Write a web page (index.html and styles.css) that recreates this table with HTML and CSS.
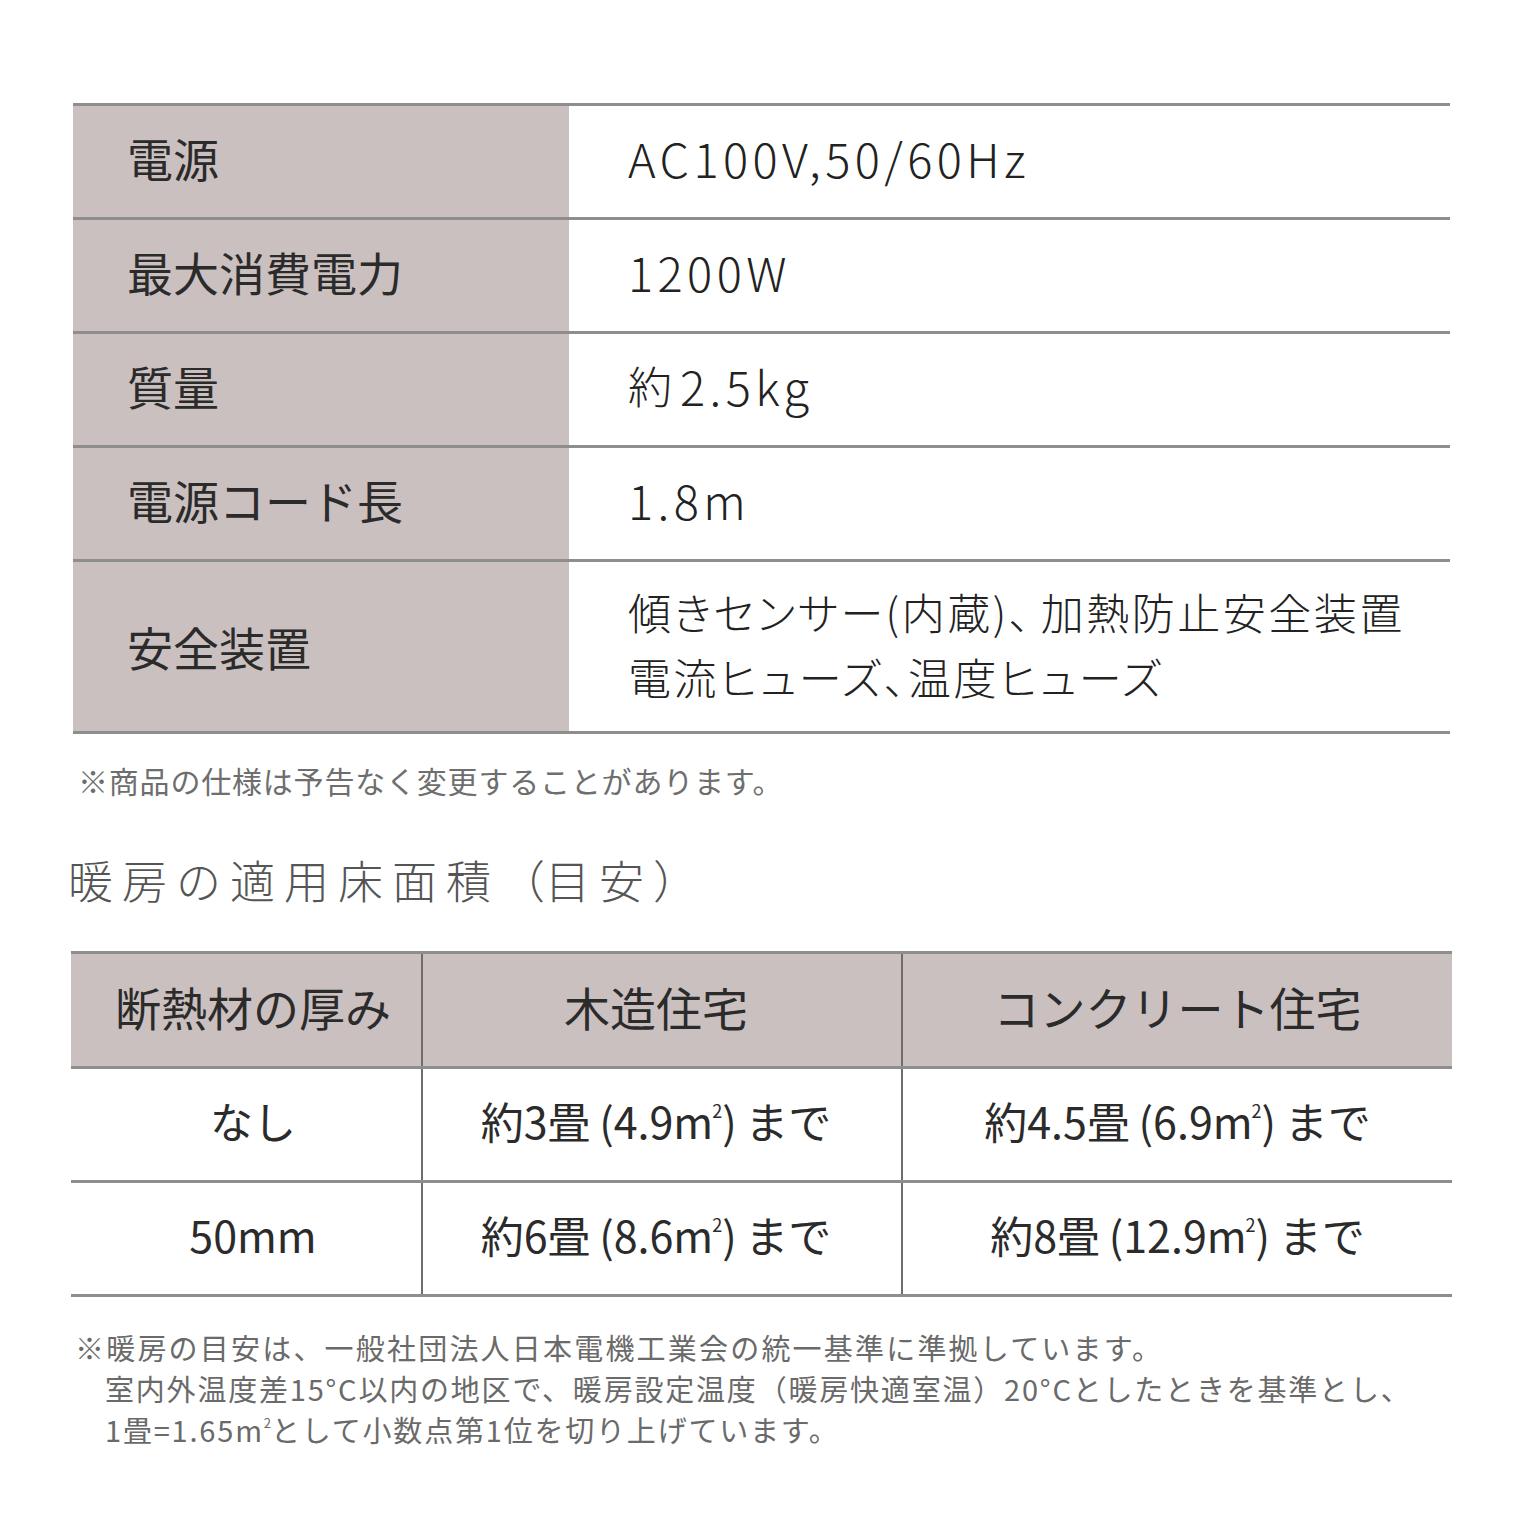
FILE: index.html
```html
<!DOCTYPE html>
<html lang="ja">
<head>
<meta charset="utf-8">
<title>仕様</title>
<link rel="stylesheet" href="styles.css">
</head>
<body>
<main class="page">
  <section class="spec">
    <div class="spec-row">
      <div class="spec-label">電源</div>
      <div class="spec-value"><span class="latin">AC100V,50/60Hz</span></div>
    </div>
    <div class="spec-row">
      <div class="spec-label">最大消費電力</div>
      <div class="spec-value"><span class="latin">1200W</span></div>
    </div>
    <div class="spec-row">
      <div class="spec-label">質量</div>
      <div class="spec-value"><span class="jp jp-single">約</span><span class="latin">2.5kg</span></div>
    </div>
    <div class="spec-row">
      <div class="spec-label">電源コード長</div>
      <div class="spec-value"><span class="latin">1.8m</span></div>
    </div>
    <div class="spec-row spec-row-tall">
      <div class="spec-label">安全装置</div>
      <div class="spec-value spec-value-multi">
        <span class="jp">傾きセンサー(内蔵)<span class="comma-wide">、</span>加熱防止安全装置</span>
        <span class="jp">電流ヒューズ、温度ヒューズ</span>
      </div>
    </div>
  </section>
  <p class="note-small">※商品の仕様は予告なく変更することがあります。</p>

  <h2 class="heading">暖房の適用床面積<span class="paren">（</span>目安<span class="paren">）</span></h2>

  <section class="area">
    <div class="area-row area-head">
      <div class="area-cell"><span class="area-text">断熱材の厚み</span></div>
      <div class="area-cell"><span class="area-text">木造住宅</span></div>
      <div class="area-cell"><span class="area-text">コンクリート住宅</span></div>
    </div>
    <div class="area-row">
      <div class="area-cell"><span class="area-text">なし</span></div>
      <div class="area-cell"><span class="area-text">約3畳 (4.9m<span class="sq">2</span>) まで</span></div>
      <div class="area-cell"><span class="area-text">約4.5畳 (6.9m<span class="sq">2</span>) まで</span></div>
    </div>
    <div class="area-row">
      <div class="area-cell"><span class="area-text">50mm</span></div>
      <div class="area-cell"><span class="area-text">約6畳 (8.6m<span class="sq">2</span>) まで</span></div>
      <div class="area-cell"><span class="area-text">約8畳 (12.9m<span class="sq">2</span>) まで</span></div>
    </div>
  </section>

  <div class="notes">
    <p class="notes-line">※暖房の目安は、一般社団法人日本電機工業会の統一基準に準拠しています。</p>
    <p class="notes-line notes-indent notes-digits">室内外温度差15°C以内の地区で、暖房設定温度（暖房快適室温）20°Cとしたときを基準とし、</p>
    <p class="notes-line notes-indent notes-digits">1畳=1.65m<span class="sq-small">2</span>として小数点第1位を切り上げています。</p>
  </div>
</main>
</body>
</html>
```

FILE: styles.css
```css
* {
  box-sizing: border-box;
}

html, body {
  margin: 0;
  padding: 0;
  background: #ffffff;
}

body {
  font-family: "Noto Sans CJK JP", "Noto Sans", sans-serif;
  color: #2e2e2e;
}

.page {
  padding: 103px 84px 60px 73px;
  display: flex;
  flex-direction: column;
}

/* ---------- spec table ---------- */
.spec {
  width: 1377px;
  display: flex;
  flex-direction: column;
  border-bottom: 3px solid #8e8e8e;
}

.spec-row {
  display: grid;
  grid-template-columns: 496px 1fr;
  height: 114px;
  border-top: 3px solid #8e8e8e;
}

.spec-row-tall {
  height: 172px;
}

.spec-label {
  background: #cbc0c0;
  padding-left: 54px;
  padding-bottom: 9px;
  display: flex;
  align-items: center;
  font-size: 46px;
  line-height: 1;
  color: #2b2b2b;
}

.spec-row-tall .spec-label {
  padding-bottom: 2px;
}

.spec-value {
  padding-left: 59px;
  padding-bottom: 9px;
  display: flex;
  align-items: center;
  color: #222;
}

.spec-value-multi {
  flex-direction: column;
  align-items: flex-start;
  justify-content: center;
  gap: 22px;
  padding-bottom: 6px;
}

.latin {
  font-size: 47px;
  font-weight: 300;
  letter-spacing: 4.4px;
  line-height: 1;
}

.jp {
  font-size: 43px;
  font-weight: 300;
  letter-spacing: 2.5px;
  line-height: 1;
  font-feature-settings: "palt";
}

.jp-single {
  font-size: 44px;
  letter-spacing: 0;
  margin-right: 8px;
}

.comma-wide {
  margin-right: 8px;
}

.note-small {
  margin: 26px 0 0 5px;
  font-size: 30px;
  line-height: 40px;
  color: #6e6e6e;
  letter-spacing: 0.8px;
}

.heading {
  margin: 50px 0 0 -5px;
  font-size: 45px;
  line-height: 60px;
  font-weight: 300;
  color: #555555;
  letter-spacing: 9px;
}

.paren {
  letter-spacing: 0;
}

/* ---------- area table ---------- */
.area {
  width: 1381px;
  margin: 41px 0 0 -2px;
  display: flex;
  flex-direction: column;
  border-bottom: 3px solid #8e8e8e;
}

.area-row {
  display: grid;
  grid-template-columns: 350px 480px 1fr;
  height: 114px;
  border-top: 3px solid #8e8e8e;
}

.area-head {
  background: #cbc0c0;
  height: 115px;
}

.area-cell {
  display: flex;
  align-items: center;
  justify-content: center;
  padding-bottom: 8px;
  border-left: 2px solid #6e6e6e;
}

.area-cell:first-child {
  border-left: none;
  padding-left: 14px;
}

.area-cell:nth-child(2) {
  padding-right: 12px;
}

.area-text {
  font-size: 43px;
  line-height: 1;
  color: #2b2b2b;
  word-spacing: -1px;
  white-space: nowrap;
}

.area-head .area-text {
  font-size: 46px;
}

.sq {
  font-size: 18px;
  line-height: 0;
  vertical-align: 21px;
  margin-left: -1px;
}

.notes {
  margin: 30px 0 0 2px;
  display: flex;
  flex-direction: column;
}

.notes-line {
  margin: 0;
  font-size: 29px;
  line-height: 41px;
  color: #6a6a6a;
  letter-spacing: 2.2px;
}

.notes-digits {
  letter-spacing: 1.8px;
}

.notes-indent {
  padding-left: 30px;
}

.sq-small {
  font-size: 13px;
  line-height: 0;
  vertical-align: 14px;
  letter-spacing: 0;
}
```
